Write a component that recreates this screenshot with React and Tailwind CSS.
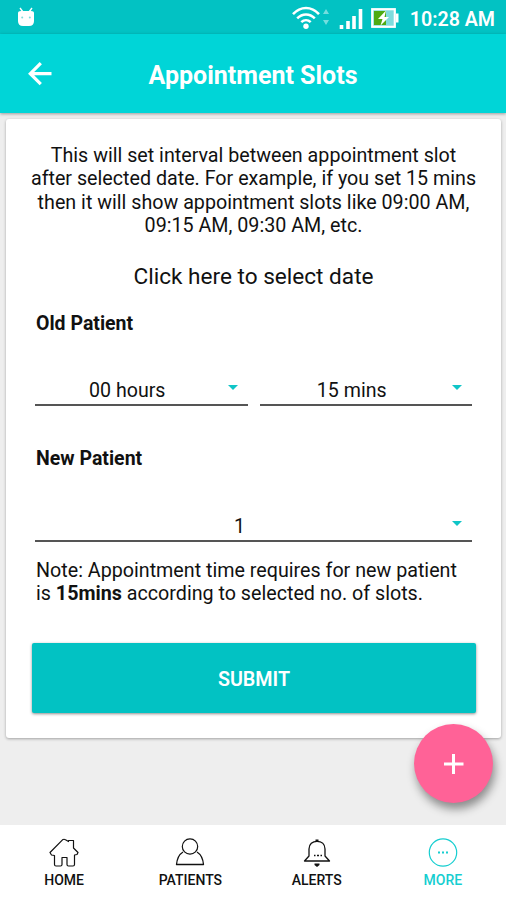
// ═════════════════════════════════════════════════════════════════════════
//   <App />
//
//   Appointment slot settings: interval for old patients, slot count for
//   new patients, bottom tab bar.
// ═════════════════════════════════════════════════════════════════════════

import { useState } from 'react';

const tabs = [
  { id: 'home', label: 'HOME', Icon: HomeIcon },
  { id: 'patients', label: 'PATIENTS', Icon: PatientIcon },
  { id: 'alerts', label: 'ALERTS', Icon: BellIcon },
  { id: 'more', label: 'MORE', Icon: MoreIcon },
];

export default function App() {
  const [activeTab, setActiveTab] = useState('more');

  return (
    <div className="relative flex flex-col w-[506px] h-[900px] overflow-hidden bg-[#eeeeee] text-[#111111] font-[Roboto,sans-serif]">
      <StatusBar />

      {/* ─── App bar ─── */}
      <header className="h-[79px] shrink-0 flex items-center bg-[#00d5d7] text-white shadow-[0_1px_3px_rgba(0,0,0,0.35)]">
        <button type="button" aria-label="Back" className="ml-7 w-6 h-6">
          <svg viewBox="0 0 24 24" fill="none" className="w-6 h-6">
            <path d="M23.5 11.7H2.5M12.8 1.2L2.3 11.7l10.5 10.5" stroke="currentColor" strokeWidth="3.2" />
          </svg>
        </button>
        <h1 className="flex-1 pt-[3px] pr-[52px] text-center text-[25px] font-bold leading-none">Appointment Slots</h1>
      </header>

      {/* ─── Settings card ─── */}
      <main className="flex-1 pt-1.5 pl-1.5 pr-[5px]">
        <div className="h-[619px] rounded-[3px] bg-white px-[29px] pt-[25px] shadow-[0_1px_3px_rgba(0,0,0,0.32)]">
          <p className="-mx-2 text-center text-[19.7px] leading-[23.3px] whitespace-nowrap">
            This will set interval between appointment slot
            <br />
            after selected date. For example, if you set 15 mins
            <br />
            then it will show appointment slots like 09:00 AM,
            <br />
            09:15 AM, 09:30 AM, etc.
          </p>
          <button type="button" className="block mx-auto mt-[26px] text-[22.6px] leading-[27px]">
            Click here to select date
          </button>

          <h2 className="mt-[22px] pl-px text-[19.5px] leading-6 font-bold">Old Patient</h2>
          <div className="mt-[40px] flex gap-3">
            <Spinner value="00 hours" />
            <Spinner value="15 mins" />
          </div>

          <h2 className="mt-[41px] pl-px text-[19.5px] leading-6 font-bold">New Patient</h2>
          <div className="mt-[41px] flex">
            <Spinner value="1" />
          </div>

          <p className="mt-[17px] pl-px text-[19.7px] leading-[23.3px] whitespace-nowrap">
            Note: Appointment time requires for new patient
            <br />
            is <b>15mins</b> according to selected no. of slots.
          </p>

          <button
            type="button"
            className="block mt-[37px] -ml-[3px] w-[444px] h-[70px] pt-[3px] rounded-[2px] bg-[#02c2c3] text-white text-[19.7px] font-semibold shadow-[0_1px_3px_rgba(0,0,0,0.45)]"
          >
            SUBMIT
          </button>
        </div>
      </main>

      {/* ─── Floating add button ─── */}
      <button
        type="button"
        aria-label="Add"
        className="absolute left-[414px] top-[724px] w-[79px] h-[79px] rounded-full bg-[#ff6297] text-white flex items-center justify-center shadow-[2px_6px_10px_rgba(0,0,0,0.42)]"
      >
        <svg viewBox="0 0 20 20" className="w-5 h-5">
          <path d="M9.5 0v20M0 10h19.5" stroke="currentColor" strokeWidth="3" />
        </svg>
      </button>

      {/* ─── Tab bar ─── */}
      <nav className="h-[75px] shrink-0 flex bg-white pl-px">
        {tabs.map(({ id, label, Icon }) => (
          <button
            key={id}
            type="button"
            onClick={() => setActiveTab(id)}
            className={`flex-1 flex flex-col items-center pt-[13px] ${
              id === activeTab ? 'text-[#16ced0]' : 'text-[#111111]'
            }`}
          >
            <Icon />
            <span className="mt-[3px] text-[14px] leading-[18px] font-medium">{label}</span>
          </button>
        ))}
      </nav>
    </div>
  );
}

function StatusBar() {
  return (
    <div className="h-[34px] shrink-0 flex items-center bg-[#02c2c3] text-white">
      <svg viewBox="0 0 18 20" className="ml-[17px] w-[18px] h-5">
        <path d="M3 1l3 4M15 1l-3 4" stroke="currentColor" strokeWidth="1.4" />
        <path d="M1 6Q1 4 4 4h10q3 0 3 2v8q0 5-5 5H6q-5 0-5-5z" fill="currentColor" />
        <circle cx="5.2" cy="10.5" r="1" fill="#7fdcdd" />
        <circle cx="12.8" cy="10.5" r="1" fill="#7fdcdd" />
      </svg>

      <div className="ml-auto pr-[11px] flex items-center">
        {/* wifi */}
        <svg viewBox="0 0 28 24" fill="none" className="w-7 h-6 mt-0.5">
          <path d="M1 8.2C8.5 0 19.5 0 27 8.2M5.2 12.3c5-5.2 12.6-5.2 17.6 0M9.3 16.2c2.7-2.7 6.7-2.7 9.4 0" stroke="currentColor" strokeWidth="2.5" />
          <circle cx="14" cy="20.3" r="2.7" fill="currentColor" />
        </svg>
        <svg viewBox="0 0 6 16" className="ml-[3px] w-1.5 h-4 opacity-45">
          <path d="M0 5l3-5 3 5zM0 11l3 5 3-5z" fill="currentColor" />
        </svg>
        {/* signal */}
        <svg viewBox="0 0 24 22" className="ml-2.5 mt-1 w-6 h-[22px]">
          <path d="M2.5 17v4M9 13v8M15 8v13M21.5 1v20" stroke="currentColor" strokeWidth="3.6" />
        </svg>
        {/* battery */}
        <svg viewBox="0 0 28 20" className="ml-2 mt-0.5 w-7 h-5">
          <rect x="1.2" y="1.2" width="22.6" height="17.6" fill="#7fdcdd" stroke="currentColor" strokeWidth="2.2" />
          <rect x="3" y="3" width="12" height="14" fill="#4eaa12" />
          <rect x="25" y="5.5" width="2.5" height="9" fill="currentColor" />
          <path d="M15 2.5L7 11h4.5L9.5 17.5 18 9h-4.5z" fill="currentColor" />
        </svg>
        <span className="ml-[11px] mt-[5px] text-[19.6px] leading-none font-semibold">10:28 AM</span>
      </div>
    </div>
  );
}

// Dropdown row with a centred value and an underline
function Spinner({ value }) {
  return (
    <button type="button" className="relative flex-1 h-[30px] pt-0.5 pr-[28px] text-center text-[19.6px] leading-[26px] border-b-2 border-[#555555]">
      {value}
      <svg viewBox="0 0 10 5" className="absolute right-2.5 top-[9px] w-2.5 h-[5px]">
        <path d="M0 0h10L5 5z" fill="#10c5c7" />
      </svg>
    </button>
  );
}

// ─── Tab icons ────────────────────────────────────────────────────────────
function HomeIcon() {
  return (
    <svg viewBox="0 0 30 30" fill="none" className="w-[30px] h-[30px]">
      <path
        d="M1 14.5L13.5 1.8Q15 .7 16.5 1.8L19.5 3.5V2.5H24.5V10L29 14.5L28 16.5L25.5 17V26.5Q25.5 28 24 28H19.5Q18 28 18 26.5V19.5H13V26.5Q13 28 11.5 28H7Q5.5 28 5.5 26.5V17.5L2.5 17Z"
        stroke="currentColor"
        strokeWidth="1.2"
        strokeLinejoin="round"
      />
    </svg>
  );
}

function PatientIcon() {
  return (
    <svg viewBox="0 0 30 30" fill="none" className="w-[30px] h-[30px]">
      <circle cx="15" cy="8.5" r="7.7" stroke="currentColor" strokeWidth="1.2" />
      <path d="M8 14C4 16.5 2 21 1.5 26.5H28.5C28 21 26 16.5 22 14" stroke="currentColor" strokeWidth="1.3" strokeLinejoin="round" />
    </svg>
  );
}

function BellIcon() {
  return (
    <svg viewBox="0 0 30 30" fill="none" className="w-[30px] h-[30px]">
      <path d="M7 18V11C7 6 10.5 3.3 15 3.3S23 6 23 11V18L27.5 23H2.5Z" stroke="currentColor" strokeWidth="1.3" strokeLinejoin="round" />
      <path d="M13.5 3.3V1.5h3v1.8M12.5 25.5h5v1.5l-2.5 2l-2.5-2z" fill="currentColor" />
      <path d="M12 17.5h1.5M15 17.5h2M18.5 17.5h1.5" stroke="currentColor" strokeWidth="1.5" />
    </svg>
  );
}

function MoreIcon() {
  return (
    <svg viewBox="0 0 30 30" fill="none" className="w-[30px] h-[30px]">
      <circle cx="15" cy="14.5" r="13.7" stroke="currentColor" strokeWidth="1.2" />
      <path d="M10 14.5h2M14 14.5h2M18 14.5h2" stroke="currentColor" strokeWidth="1.8" />
    </svg>
  );
}
